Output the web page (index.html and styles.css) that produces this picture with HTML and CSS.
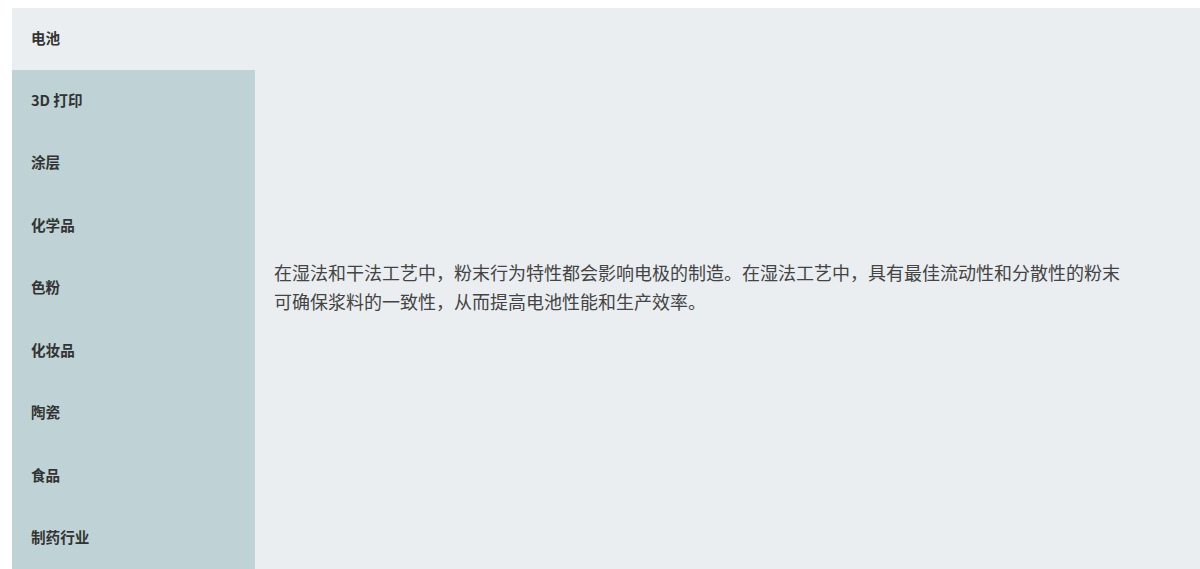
FILE: index.html
```html
<!DOCTYPE html>
<html lang="zh">
<head>
<meta charset="utf-8">
<link rel="stylesheet" href="styles.css">
</head>
<body>
<div class="tabs">
  <ul class="tab-list">
    <li class="tab active">电池</li>
    <li class="tab">3D 打印</li>
    <li class="tab">涂层</li>
    <li class="tab">化学品</li>
    <li class="tab">色粉</li>
    <li class="tab">化妆品</li>
    <li class="tab">陶瓷</li>
    <li class="tab">食品</li>
    <li class="tab">制药行业</li>
  </ul>
  <div class="panel">
    <p class="panel-text">在湿法和干法工艺中，粉末行为特性都会影响电极的制造。在湿法工艺中，具有最佳流动性和分散性的粉末可确保浆料的一致性，从而提高电池性能和生产效率。</p>
  </div>
</div>
</body>
</html>
```
FILE: styles.css
```css
html, body {
  margin: 0;
  padding: 0;
  background: #ffffff;
}
body {
  padding: 8px 0 0 12px;
  font-family: "Noto Sans CJK SC", "Noto Sans", sans-serif;
  overflow: hidden;
}
.tabs {
  display: flex;
  height: 570px;
  background: #eaeef1;
}
.tab-list {
  list-style: none;
  margin: 0;
  padding: 0;
  width: 243px;
  flex: none;
  background: #bfd3d6;
  display: flex;
  flex-direction: column;
}
.tab {
  height: 62.5px;
  box-sizing: border-box;
  display: flex;
  align-items: center;
  padding: 0 0 4px 19px;
  font-size: 14.6px;
  font-weight: 700;
  color: #333333;
}
.tab.active {
  height: 62px;
  background: #eaeef1;
}
.panel {
  flex: 1;
  display: flex;
  align-items: center;
  padding: 0 19px 12px 19px;
}
.panel-text {
  margin: 0;
  max-width: 860px;
  font-size: 18px;
  line-height: 29px;
  color: #444444;
}
```
